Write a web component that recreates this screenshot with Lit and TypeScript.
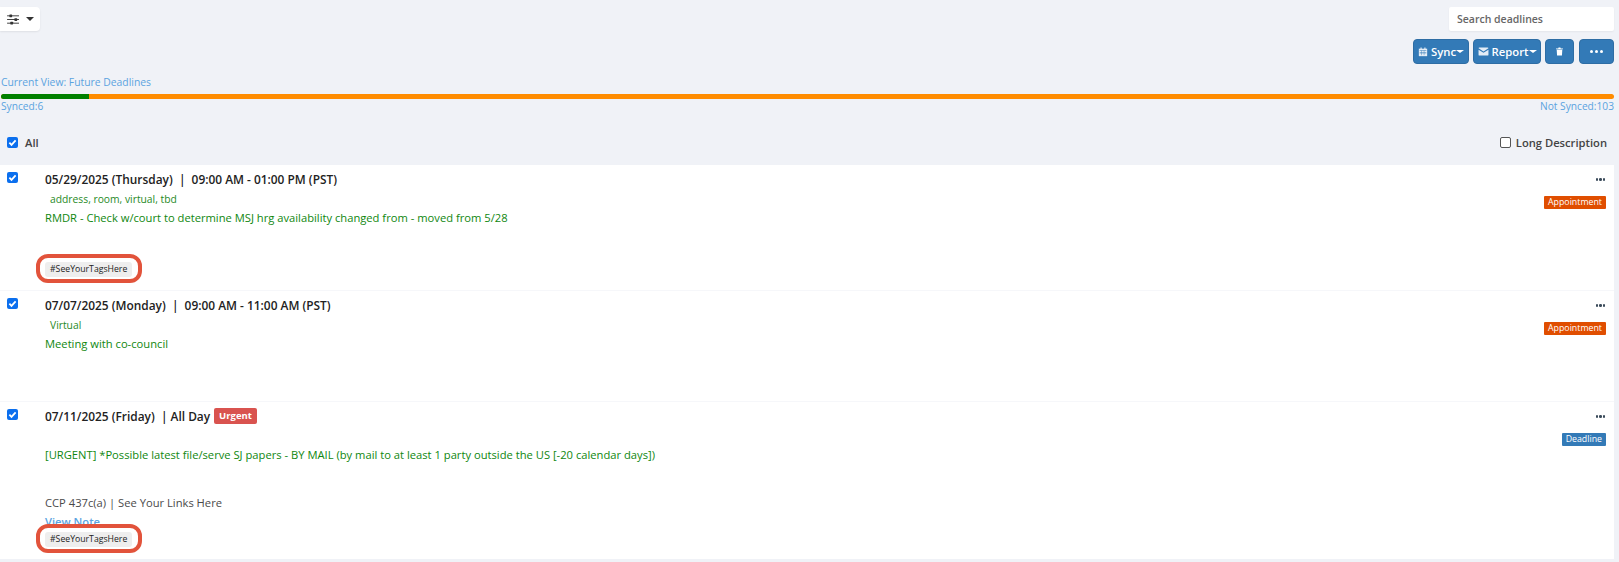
import { LitElement, html, css, svg } from "lit";
import { customElement } from "lit/decorators.js";

interface Row {
  title: string; urgent?: boolean; sub?: string; desc: string; type: string; typeClass: string;
  links?: boolean; tags: boolean; cls: string;
}
const rows: Row[] = [
  { title: "05/29/2025 (Thursday)\u00a0 | \u00a009:00 AM - 01:00 PM (PST)", sub: "address, room, virtual, tbd",
    desc: "RMDR - Check w/court to determine MSJ hrg availability changed from - moved from 5/28",
    type: "Appointment", typeClass: "appt", tags: true, cls: "r1" },
  { title: "07/07/2025 (Monday)\u00a0 | \u00a009:00 AM - 11:00 AM (PST)", sub: "Virtual", desc: "Meeting with co-council",
    type: "Appointment", typeClass: "appt", tags: false, cls: "r2" },
  { title: "07/11/2025 (Friday)\u00a0 | All Day", urgent: true,
    desc: "[URGENT] *Possible latest file/serve SJ papers - BY MAIL (by mail to at least 1 party outside the US [-20 calendar days])",
    type: "Deadline", typeClass: "dead", links: true, tags: true, cls: "r3" },
];

const check = svg`<svg viewBox="0 0 12 12" width="11" height="11"><path d="M2.6 6.2l2.3 2.4 4.5-5" fill="none" stroke="#fff" stroke-width="1.9"/></svg>`;
const sliders = html`<svg viewBox="0 0 14 12" width="13" height="11" fill="#333"><rect y="1.5" width="13" height="1"/><rect y="5.5" width="13" height="1"/><rect y="9.5" width="13" height="1"/><rect x="2.5" y=".5" width="3" height="3" rx=".5"/><rect x="8" y="4.5" width="3" height="3" rx=".5"/><rect x="3.5" y="8.5" width="3" height="3" rx=".5"/></svg>`;
const calendar = html`<svg viewBox="0 0 12 12" width="10" height="10" fill="#e4edf6"><path d="M1 2h10v9H1z"/><path d="M3 .5h1.4V3H3zM7.6.5H9V3H7.6z"/><path fill="#337ab7" d="M2 4h8v.6H2zM2 6h8v.5H2zM2 8h8v.5H2zM4 4.5h.5V10H4zM7 4.5h.5V10H7z"/></svg>`;
const mail = html`<svg viewBox="0 0 12 10" width="11" height="9"><path fill="#e4edf6" d="M.5 1.5A1 1 0 0 1 1.5.5h9a1 1 0 0 1 1 1L6 5 .5 1.5zM.5 3v5.5a1 1 0 0 0 1 1h9a1 1 0 0 0 1-1V3L6 6.4z"/></svg>`;
const trash = html`<svg viewBox="0 0 10 12" width="7" height="9" fill="#fff"><path d="M0 1.6h3.2L3.7.4h2.6l.5 1.2H10v1.2H0zM1 3.6h8l-.5 8H1.5z"/></svg>`;

@customElement("app-root")
export class AppRoot extends LitElement {
  static styles = css`
    :host { display: block; width: 1619px; height: 562px; overflow: hidden; background: #f0f2f7;
      font-family: "Open Sans", "Noto Sans", sans-serif; color: #333; font-size: 11px; }
    .top { display: flex; justify-content: space-between; padding: 7px 5px 0 0; height: 24px; }
    .filter { width: 40px; height: 24px; box-sizing: border-box; background: #fff; border-radius: 0 4px 4px 0;
      box-shadow: 0 1px 2px rgba(0,0,0,.08); display: flex; align-items: center; gap: 6px; padding-left: 7px; }
    .filter .caret { border-width: 4px; border-top-width: 4px; border-bottom: 0; }
    .caret { width: 0; height: 0; border: 3.5px solid transparent; border-top: 4px solid #333; border-bottom: 0; }
    .search { width: 165px; height: 24px; box-sizing: border-box; background: #fff; border-radius: 2px; color: #666;
      display: flex; align-items: center; padding-left: 8px; font-size: 10.5px; font-weight: 600;
      box-shadow: 0 1px 2px rgba(0,0,0,.05); }
    .btns { display: flex; justify-content: flex-end; gap: 4px; padding: 8px 5px 0 0; height: 25px; }
    .btn { background: #337ab7; color: #fff; border-radius: 4px; height: 25px; box-sizing: border-box; font-weight: 600;
      font-size: 11.3px; display: flex; align-items: center; justify-content: center; gap: 3px; border: 1px solid #2e6da4; }
    .btn .caret { border-top-color: #fff; border-width: 4px; border-top-width: 3px; border-bottom: 0; margin-left: -3px; }
    .sync { width: 56px; } .report { width: 68px; } .trash { width: 29px; } .more { width: 35px; margin-left: 1px; gap: 2px; }
    .more i { width: 3px; height: 3px; border-radius: 50%; background: #fff; }
    .view { color: #5ba3e0; font-size: 10.35px; line-height: 14px; padding: 11px 0 0 1px; }
    .bar { display: flex; height: 5px; margin: 5px 5px 0 1px; border-radius: 3px; overflow: hidden; background: #ff8c00; }
    .bar i { display: block; width: 88px; background: #008000; }
    .counts { display: flex; justify-content: space-between; color: #5ba3e0; font-size: 10.2px; line-height: 14px; padding: 0 5px 0 1px; }
    .all { display: flex; justify-content: space-between; align-items: center; height: 18px; margin-top: 20px; padding: 0 12px 1px 7px;
      font-weight: 600; font-size: 11.2px; color: #444; }
    .all > label { display: flex; align-items: center; gap: 7px; }
    .all > label + label { gap: 5px; }
    .cb { display: inline-flex; width: 11px; height: 11px; background: #0b6fee; border-radius: 2px; align-items: center; justify-content: center; }
    .cb.off { background: #fff; border: 1px solid #555; box-sizing: border-box; }
    .list { margin: 13px 5px 0 0; background: #f6f7fa; display: flex; flex-direction: column; gap: 1px; }
    .row { background: #fff; display: grid; grid-template-columns: 45px 1fr auto; position: relative; box-sizing: border-box; }
    .r1 { height: 125px; } .r2 { height: 110px; } .r3 { height: 157px; }
    .c { padding: 6px 0 0 7px; }
    .main { padding-top: 6px; display: flex; flex-direction: column; }
    .title { font-weight: 600; font-size: 11.9px; line-height: 16px; color: #222; display: flex; align-items: center; gap: 3px; }
    .urgent { background: #d9534f; color: #fff; font-size: 9.5px; font-weight: 700; border-radius: 2px; padding: 0 5px; line-height: 16px; margin-left: 1px; }
    .sub { color: #1f8a1f; font-size: 10.3px; line-height: 14px; padding: 5px 0 0 5px; }
    .desc { color: #0f870f; font-size: 11.2px; line-height: 16px; padding-top: 4px; }
    .r3 .desc { padding-top: 23px; }
    .links { font-size: 11.2px; color: #4a4a4a; line-height: 16px; padding-top: 32px; }
    .note { color: #5ba3e0; font-size: 11.2px; line-height: 16px; padding-top: 3px; font-weight: 600; margin-bottom: -7px; }
    .tag { align-self: flex-start; background: #eee; color: #222; font-size: 8.7px; border-radius: 3px; line-height: 15px; padding: 0 5px; position: relative; z-index: 2; }
    .r1 .tag { margin-top: 36px; }
    .r3 .tag { margin-top: 9px; }
    .ring { position: absolute; left: 36px; border: 4px solid #e2533b; border-radius: 12px; box-sizing: border-box; width: 106px; height: 29px; background: #fff; z-index: 1; }
    .r1 .ring { top: 89px; } .r3 .ring { top: 122px; }
    .side { display: flex; flex-direction: column; align-items: flex-end; padding: 10px 8px 0 0; }
    .dots { display: flex; gap: 1px; margin-right: 1px; height: 12px; }
    .dots i { width: 2.5px; height: 2.5px; background: #3a4a5a; border-radius: 50%; margin-top: 3px; }
    .badge { margin-top: 9px; color: #fff; font-size: 8.8px; line-height: 13px; padding: 0 4px; border-radius: 1px; }
    .appt { background: #e04e00; } .dead { background: #337ab7; }
  `;

  render() {
    return html`
      <div class="top">
        <div class="filter">${sliders}<span class="caret"></span></div>
        <div class="search">Search deadlines</div>
      </div>
      <div class="btns">
        <div class="btn sync">${calendar}<span>Sync</span><span class="caret"></span></div>
        <div class="btn report">${mail}<span>Report</span><span class="caret"></span></div>
        <div class="btn trash">${trash}</div>
        <div class="btn more"><i></i><i></i><i></i></div>
      </div>
      <div class="view">Current View: Future Deadlines</div>
      <div class="bar"><i></i></div>
      <div class="counts"><span>Synced:6</span><span>Not Synced:103</span></div>
      <div class="all">
        <label><span class="cb">${check}</span>All</label>
        <label><span class="cb off"></span>Long Description</label>
      </div>
      <div class="list">
        ${rows.map((r) => html`
          <div class="row ${r.cls}">
            <div class="c"><span class="cb">${check}</span></div>
            <div class="main">
              <div class="title">${r.title}${r.urgent ? html`<span class="urgent">Urgent</span>` : ""}</div>
              ${r.sub ? html`<div class="sub">${r.sub}</div>` : ""}
              <div class="desc">${r.desc}</div>
              ${r.links ? html`<div class="links">CCP 437c(a) | See Your Links Here</div><div class="note">View Note</div>` : ""}
              ${r.tags ? html`<div class="tag">#SeeYourTagsHere</div>` : ""}
            </div>
            <div class="side">
              <div class="dots"><i></i><i></i><i></i></div>
              <div class="badge ${r.typeClass}">${r.type}</div>
            </div>
            ${r.tags ? html`<div class="ring"></div>` : ""}
          </div>`)}
      </div>
    `;
  }
}
